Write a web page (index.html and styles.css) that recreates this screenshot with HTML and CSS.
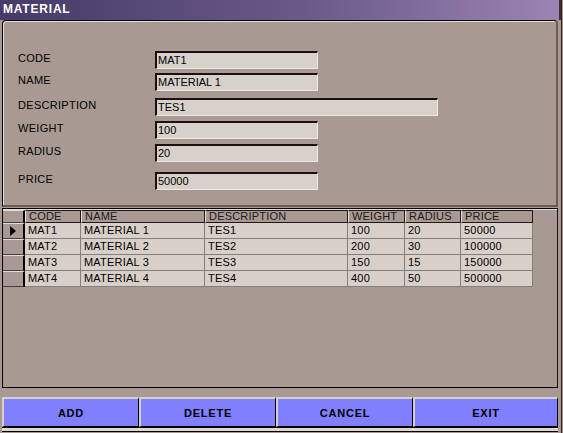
FILE: index.html
```html
<!DOCTYPE html>
<html lang="en">
<head>
    <meta charset="UTF-8">
    <title>Material</title>
    <link rel="stylesheet" href="styles.css">
</head>
<body>

    <div class="window">
        <!-- Title bar -->
        <div class="titlebar">MATERIAL</div>

        <div class="client">
            <!-- Entry form -->
            <div class="form-panel">
                <div class="field">
                    <label>CODE</label>
                    <div class="input">MAT1</div>
                </div>
                <div class="field sp-sm">
                    <label>NAME</label>
                    <div class="input">MATERIAL 1</div>
                </div>
                <div class="field sp-md">
                    <label>DESCRIPTION</label>
                    <div class="input input-wide">TES1</div>
                </div>
                <div class="field">
                    <label>WEIGHT</label>
                    <div class="input">100</div>
                </div>
                <div class="field">
                    <label>RADIUS</label>
                    <div class="input">20</div>
                </div>
                <div class="field sp-lg">
                    <label>PRICE</label>
                    <div class="input">50000</div>
                </div>
            </div>

            <!-- Data grid -->
            <div class="grid">
                <div class="grid-row grid-head">
                    <div class="ind"></div>
                    <div>CODE</div>
                    <div>NAME</div>
                    <div>DESCRIPTION</div>
                    <div>WEIGHT</div>
                    <div>RADIUS</div>
                    <div>PRICE</div>
                </div>
                <div class="grid-row">
                    <div class="ind"><span class="arrow"></span></div>
                    <div>MAT1</div>
                    <div>MATERIAL 1</div>
                    <div>TES1</div>
                    <div>100</div>
                    <div>20</div>
                    <div>50000</div>
                </div>
                <div class="grid-row">
                    <div class="ind"></div>
                    <div>MAT2</div>
                    <div>MATERIAL 2</div>
                    <div>TES2</div>
                    <div>200</div>
                    <div>30</div>
                    <div>100000</div>
                </div>
                <div class="grid-row">
                    <div class="ind"></div>
                    <div>MAT3</div>
                    <div>MATERIAL 3</div>
                    <div>TES3</div>
                    <div>150</div>
                    <div>15</div>
                    <div>150000</div>
                </div>
                <div class="grid-row">
                    <div class="ind"></div>
                    <div>MAT4</div>
                    <div>MATERIAL 4</div>
                    <div>TES4</div>
                    <div>400</div>
                    <div>50</div>
                    <div>500000</div>
                </div>
            </div>

            <!-- Buttons -->
            <div class="buttons">
                <button>ADD</button>
                <button>DELETE</button>
                <button>CANCEL</button>
                <button class="btn-last">EXIT</button>
            </div>
        </div>
    </div>

</body>
</html>
```

FILE: styles.css
```css
body {
    margin: 0;
    padding: 0;
    width: 563px;
    height: 433px;
    overflow: hidden;
    background-color: #a89a93;
    font-family: "Liberation Sans", Arial, sans-serif;
    font-size: 11px;
    color: #000;
}

.window {
    width: 561px;
    height: 433px;
    display: flex;
    flex-direction: column;
    border-right: 1px solid #2a2020;
}

/* Title bar */
.titlebar {
    height: 20px;
    line-height: 19px;
    padding-left: 3px;
    background: linear-gradient(to right, #453a68, #6a5a8a 55%, #9c84b4);
    color: #fff;
    font-weight: bold;
    font-size: 12px;
    letter-spacing: 0.8px;
    border-right: 2px solid #3a3040;
}

.client {
    flex: 1;
    display: flex;
    flex-direction: column;
    padding-left: 2px;
    padding-right: 3px;
}

/* Entry form panel */
.form-panel {
    height: 187px;
    box-sizing: border-box;
    border-top: 1px solid #000;
    border-left: 1px solid #000;
    border-right: 2px solid #6e5a54;
    border-bottom: 2px solid #6e5a54;
    border-radius: 4px 4px 0 0;
    box-shadow: inset 1px 1px 0 #e4dcd6;
    padding: 30px 0 0 15px;
}

.field {
    display: flex;
    height: 18px;
    margin-top: 5px;
}

.field:first-child {
    margin-top: 0;
}

.field.sp-sm {
    margin-top: 4px;
}

.field.sp-md {
    margin-top: 7px;
}

.field.sp-lg {
    margin-top: 10px;
}

.field label {
    width: 137px;
    line-height: 14px;
    letter-spacing: 0.3px;
}

.input {
    width: 163px;
    height: 18px;
    box-sizing: border-box;
    background-color: #d8d0cb;
    border-top: 2px solid #1a1010;
    border-left: 2px solid #1a1010;
    border-right: 1px solid #eee8e4;
    border-bottom: 1px solid #eee8e4;
    padding-left: 1px;
    line-height: 15px;
}

.input-wide {
    width: 283px;
}

/* Data grid */
.grid {
    margin-top: 1px;
    height: 180px;
    box-sizing: border-box;
    border: 1px solid #000;
    border-right-color: #1a1010;
    box-shadow: inset 0 1px 0 #e4dcd6;
}

.grid-row {
    display: grid;
    grid-template-columns: 22px 56px 124px 143px 57px 56px 72px;
    height: 16px;
}

.grid-row div {
    box-sizing: border-box;
    background-color: #d8d0c8;
    border-right: 1px solid #808080;
    border-bottom: 1px solid #808080;
    padding-left: 3px;
    line-height: 15px;
    white-space: nowrap;
    overflow: hidden;
    letter-spacing: 0.2px;
}

.grid-head {
    height: 13px;
    margin-top: 1px;
}

.grid-head div {
    background-color: #a89a93;
    border-top: 1px solid #201818;
    border-left: 1px solid #e8e0d8;
    border-right: 1px solid #201818;
    border-bottom: 1px solid #201818;
    line-height: 11px;
    color: #201818;
}

.grid-row .ind {
    background-color: #a89a93;
    border-right: 2px solid #000;
    border-top: 1px solid #e4dcd6;
    border-bottom: 1px solid #404040;
    position: relative;
}

.grid-head .ind {
    border-left: none;
}

.arrow {
    position: absolute;
    left: 7px;
    top: 2px;
    width: 0;
    height: 0;
    border-top: 5px solid transparent;
    border-bottom: 5px solid transparent;
    border-left: 6px solid #000;
}

/* Button bar */
.buttons {
    margin-top: 9px;
    display: flex;
    height: 30px;
    border-bottom: 1px solid #000;
    box-shadow: 0 3px 0 #e0d8d0, 0 4px 0 #000;
}

.buttons button {
    width: 137px;
    height: 30px;
    box-sizing: border-box;
    background-color: #8080ff;
    border-top: 2px solid #d8d0c8;
    border-left: 2px solid #d8d0c8;
    border-right: 1px solid #000;
    border-bottom: 1px solid #000;
    font-family: "Liberation Sans", Arial, sans-serif;
    font-weight: bold;
    font-size: 11px;
    letter-spacing: 0.8px;
    color: #000;
    padding: 0;
    cursor: pointer;
}

.buttons .btn-last {
    flex: 1;
}
```
